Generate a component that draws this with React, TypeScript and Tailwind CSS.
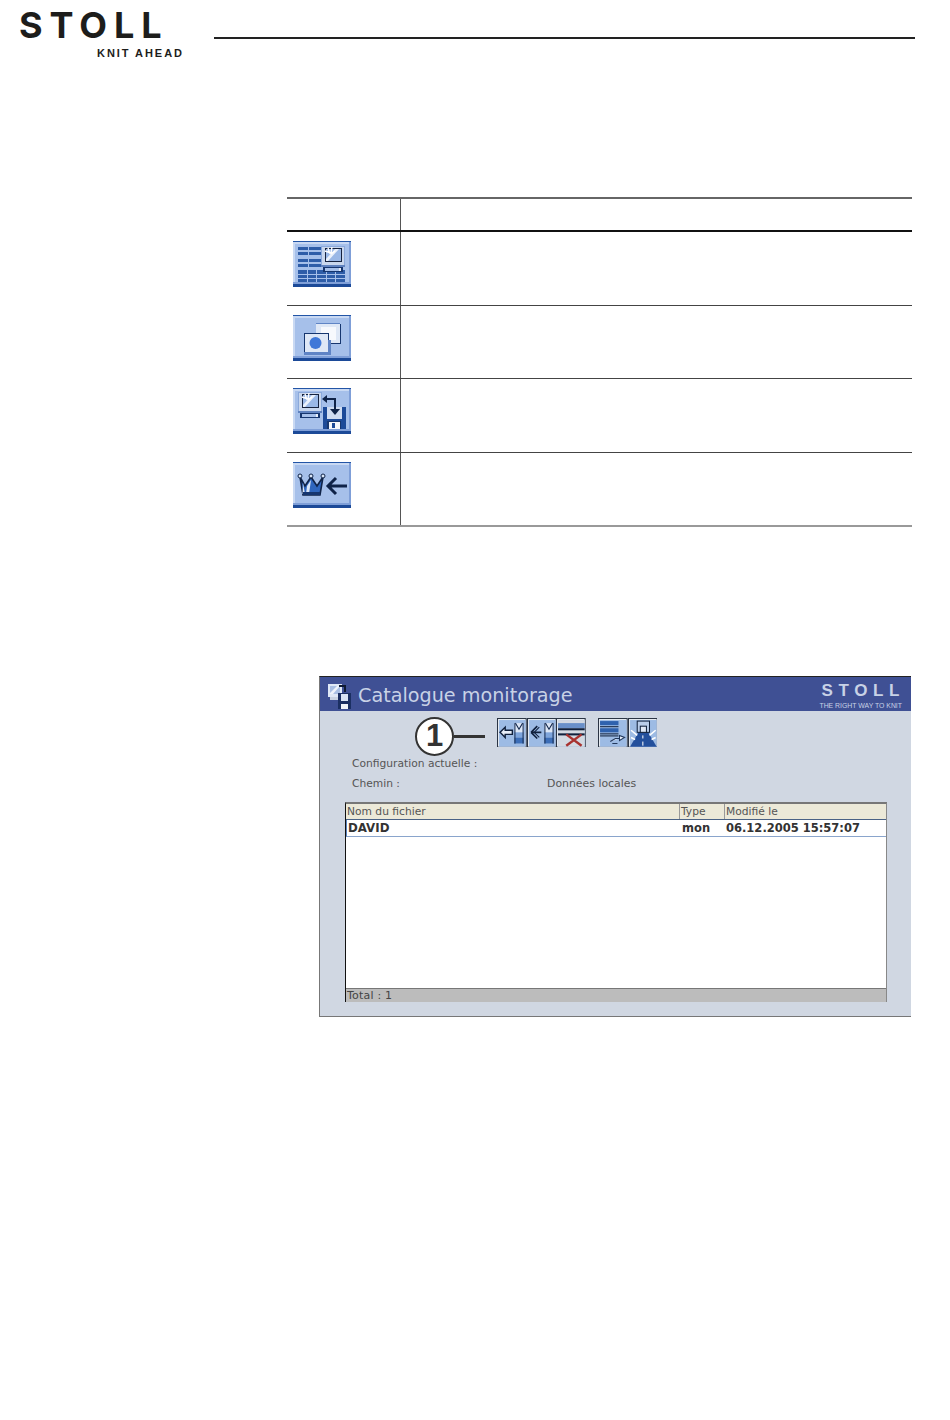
import React from "react";

function IconFrame({ children }: { children: React.ReactNode }) {
  return (
    <svg width="58" height="46" viewBox="0 0 58 46" shapeRendering="crispEdges" className="block">
      <rect width="58" height="46" fill="#a6c0ea" />
      <rect y="1" width="2" height="42" fill="#c9d9f3" />
      <rect y="1" width="58" height="2" fill="#c9d9f3" />
      <rect x="56" y="1" width="2" height="42" fill="#7f9fd8" />
      <rect y="41" width="58" height="2" fill="#7f9fd8" />
      <rect width="58" height="1" fill="#2355a6" />
      <rect y="43" width="58" height="3" fill="#1c4a98" />
      {children}
    </svg>
  );
}

function Screen({ x, y }: { x: number; y: number }) {
  return (
    <g transform={`translate(${x} ${y})`}>
      <rect x="2" y="21" width="20" height="5" fill="#16366f" />
      <rect x="4" y="22" width="14" height="3" fill="#a6c0ea" />
      <rect x="18" y="22" width="2" height="3" fill="#e8eef8" />
      <rect width="24" height="20" fill="#8ba9db" />
      <rect x="1" y="1" width="22" height="18" fill="#c9d7ed" />
      <rect x="4" y="2" width="17" height="14" fill="#16233f" />
      <rect x="5" y="3" width="15" height="12" fill="#9ab8e6" />
      <path d="M5 13 L14 3 H18 L7 15 H5Z" fill="#eaf1fb" shapeRendering="auto" />
      <path d="M7 2 L9 8 M11 1 L10 7 M4 5 L10 7 M14 5 L10 8" stroke="#fff" strokeWidth="1.4" shapeRendering="auto" />
      <rect y="19" width="24" height="2" fill="#5f82bf" />
    </g>
  );
}

function IconTable() {
  return (
    <IconFrame>
      <g fill="#2e5da8">
        {[6, 11, 18, 23].map((y) => (
          <React.Fragment key={y}>
            <rect x="5" y={y} width="10" height="3" />
            <rect x="16" y={y} width="12" height="3" />
          </React.Fragment>
        ))}
        <rect x="5" y="29" width="47" height="12" />
      </g>
      <g fill="#a6c0ea">
        <rect x="5" y="33" width="47" height="1" />
        <rect x="5" y="37" width="47" height="1" />
        <rect x="14" y="29" width="1" height="12" />
        <rect x="23" y="29" width="1" height="12" />
        <rect x="33" y="29" width="1" height="12" />
        <rect x="42" y="29" width="1" height="12" />
      </g>
      <Screen x={28} y={5} />
    </IconFrame>
  );
}

function IconWindows() {
  return (
    <IconFrame>
      <rect x="23" y="9" width="24" height="19" fill="#dfe8f6" />
      <rect x="47" y="9" width="1" height="20" fill="#16366f" />
      <rect x="23" y="28" width="25" height="1" fill="#16366f" />
      <rect x="23" y="8" width="24" height="1" fill="#5f84c5" />
      <rect x="28" y="12" width="15" height="13" fill="#f7f9fd" />
      <rect x="11" y="18" width="24" height="19" fill="#dfe8f6" stroke="#16366f" strokeWidth="1" />
      <rect x="11" y="37" width="27" height="3" fill="#5f84c5" />
      <rect x="35" y="25" width="3" height="13" fill="#5f84c5" />
      <circle cx="22.5" cy="28" r="6" fill="#3f78d8" shapeRendering="auto" />
    </IconFrame>
  );
}

function IconExchange() {
  return (
    <IconFrame>
      <Screen x={5} y={4} />
      <rect x="32" y="10" width="11" height="2" fill="#0f2348" />
      <path d="M29 11 L34 7 V15Z" fill="#0f2348" shapeRendering="auto" />
      <rect x="30" y="19" width="23" height="22" fill="#1c4a98" />
      <rect x="34" y="19" width="15" height="12" fill="#cfdcf1" />
      <rect x="34" y="33" width="14" height="8" fill="#16366f" />
      <rect x="36" y="34" width="11" height="7" fill="#f4f7fc" />
      <rect x="39" y="35" width="3" height="5" fill="#1c4a98" />
      <rect x="41" y="11" width="2" height="11" fill="#0f2348" />
      <path d="M37 21 H47 L42 27Z" fill="#0f2348" shapeRendering="auto" />
    </IconFrame>
  );
}

function IconCrown() {
  return (
    <IconFrame>
      <path d="M7 15 L12 24 L18 15 L24 24 L30 15 L27 33 H10Z" fill="#2f66bd" stroke="#0f2348" strokeWidth="1.6" shapeRendering="auto" />
      <path d="M10 21 L12 32 H9.5Z M14 24 L18 18 L16 32 H13Z" fill="#dce7f7" shapeRendering="auto" />
      <rect x="10" y="30" width="17" height="3" fill="#16366f" />
      <circle cx="7" cy="14" r="2" fill="#dce7f7" stroke="#0f2348" shapeRendering="auto" />
      <circle cx="18" cy="14" r="2" fill="#dce7f7" stroke="#0f2348" shapeRendering="auto" />
      <circle cx="30" cy="14" r="2" fill="#dce7f7" stroke="#0f2348" shapeRendering="auto" />
      <path d="M35 24 H54 M43 16 L35 24 L43 32" stroke="#0f2348" strokeWidth="3" fill="none" shapeRendering="auto" />
    </IconFrame>
  );
}

function ToolButton({ children }: { children: React.ReactNode }) {
  return (
    <svg width="29.7" height="29.7" viewBox="0 0 29 29" className="block">
      <rect width="29" height="29" fill="#2b3444" />
      <rect x="1" y="1" width="27" height="27" fill="#e8edf4" />
      <rect x="2" y="2" width="26" height="26" fill="#9dbbe4" />
      {children}
    </svg>
  );
}

function Vest({ x }: { x: number }) {
  return (
    <g transform={`translate(${x} 5)`}>
      <rect width="9" height="20" fill="#dce6f5" />
      <rect y="9" width="9" height="5" fill="#7ea5dc" />
      <rect y="14" width="9" height="6" fill="#3c6eb8" />
      <path d="M1 0 L4.5 6 L8 0" stroke="#13294f" fill="none" strokeWidth="1" />
      <rect width="1" height="20" fill="#13294f" />
      <rect x="8" width="1" height="20" fill="#13294f" />
    </g>
  );
}

function Tb1() {
  return (
    <ToolButton>
      <Vest x={17} />
      <path d="M3 14 L8 9 V12 H15 V16 H8 V19Z" fill="#e8eef8" stroke="#10203c" strokeWidth="1.4" />
    </ToolButton>
  );
}

function Tb2() {
  return (
    <ToolButton>
      <Vest x={17} />
      <path d="M4 14 L10 8 M4 14 L10 20 M4 14 H14" stroke="#10203c" strokeWidth="1.6" fill="none" />
      <path d="M7 14 L12 9 M7 14 L12 19" stroke="#10203c" strokeWidth="1" fill="none" />
    </ToolButton>
  );
}

function Tb3() {
  return (
    <ToolButton>
      <rect x="2" y="2" width="26" height="26" fill="#d3d9e2" />
      <rect x="2" y="5" width="26" height="5" fill="#6a90c9" />
      <rect x="2" y="10" width="26" height="2" fill="#10203c" />
      <rect x="2" y="15" width="26" height="2" fill="#10203c" />
      <path d="M10 16 L25 27 M25 16 L10 27" stroke="#a8322f" strokeWidth="2.4" />
    </ToolButton>
  );
}

function Tb4() {
  return (
    <ToolButton>
      <rect x="2" y="3" width="18" height="4" fill="#2f62ae" />
      <rect x="2" y="8" width="18" height="1" fill="#10203c" />
      <rect x="2" y="10" width="18" height="4" fill="#2f62ae" />
      <rect x="2" y="15" width="18" height="1" fill="#10203c" />
      <rect x="2" y="17" width="18" height="1" fill="#10203c" />
      <path d="M12 23 L17 20 H21 M19 25 H14 M21 17 L26 19 L21 22 Z" stroke="#22385c" fill="#e8eef8" strokeWidth="1" />
    </ToolButton>
  );
}

function Tb5() {
  return (
    <ToolButton>
      <path d="M2 28 L12 11 H18 L28 28Z" fill="#234f9c" />
      <path d="M3 12 L9 17 M27 12 L21 17 M3 19 L7 21 M27 19 L23 21" stroke="#fff" strokeWidth="1.5" />
      <rect x="9" y="3" width="12" height="11" fill="#b9cdea" stroke="#10203c" strokeWidth="1" />
      <rect x="12" y="8" width="6" height="6" fill="#dfe8f6" stroke="#10203c" strokeWidth="1" />
      <rect x="14" y="17" width="1" height="3" fill="#fff" />
      <rect x="14" y="23" width="1" height="4" fill="#fff" />
    </ToolButton>
  );
}

const rows = [<IconTable key="a" />, <IconWindows key="b" />, <IconExchange key="c" />, <IconCrown key="d" />];
const uiFont = "font-['DejaVu_Sans',sans-serif]";

export default function App() {
  return (
    <div className="w-[950px] h-[1420px] bg-white overflow-hidden font-['Liberation_Sans',sans-serif]">
      <header className="h-[197px] flex items-start">
        <div className="w-[214px] shrink-0 pl-[19px] pt-[5px]">
          <div className="text-[36px] leading-[40px] font-bold tracking-[6.9px] text-[#1d1d1b] font-['Inter',sans-serif]">STOLL</div>
          <div className="text-[11px] leading-[12px] pl-[78px] mt-[2px] font-bold tracking-[1.95px] whitespace-nowrap text-[#1d1d1b]">KNIT AHEAD</div>
        </div>
        <div className="w-[701px] mt-[37px] h-[2px] bg-[#222]" />
      </header>

      <div className="ml-[287px] w-[625px]">
        <div className="border-t-2 border-[#666] border-b-2 border-b-[#111] h-[35px] flex">
          <div className="w-[114px] border-r border-[#555]" />
        </div>
        {rows.map((icon, i) => (
          <div key={i} className={`flex h-[73.67px] ${i === 3 ? "border-b-2 border-[#999]" : "border-b border-[#444]"}`}>
            <div className="w-[114px] border-r border-[#555] pl-[6px] pt-[9px]">{icon}</div>
          </div>
        ))}
      </div>

      <div className={`ml-[319px] mt-[149px] w-[592px] h-[341px] bg-[#d0d7e2] border-l border-b border-[#777] border-t border-t-[#222] flex flex-col ${uiFont}`}>
        <div className="h-[34px] bg-[#3f5094] flex items-center pl-[7px] pr-[9px] shrink-0">
          <svg width="25" height="28" viewBox="0 0 25 28" className="shrink-0 mt-[2px]" shapeRendering="crispEdges">
            <rect x="1" y="3" width="14" height="13" fill="#dfe8f6" />
            <rect x="3" y="5" width="10" height="8" fill="#a9bfe4" />
            <path d="M3 12 L10 5 H13 L6 13 H3Z" fill="#eef3fb" shapeRendering="auto" />
            <rect x="3" y="16" width="10" height="3" fill="#c8d2e2" />
            <rect x="11" y="12" width="13" height="16" fill="#1b2f62" />
            <rect x="14" y="13" width="7" height="7" fill="#d9e3f4" />
            <rect x="14" y="23" width="7" height="5" fill="#f1f4fa" />
            <rect x="12" y="4" width="7" height="2" fill="#0f1a33" />
            <rect x="17" y="4" width="2" height="7" fill="#0f1a33" />
          </svg>
          <span className="ml-[6px] mt-[3px] text-[19.2px] leading-none text-[#c8d2e6] whitespace-nowrap">Catalogue monitorage</span>
          <div className="ml-auto mt-[5px] flex flex-col items-end font-['Liberation_Sans',sans-serif] text-[#c8d2e6]">
            <span className="text-[17px] leading-[17px] font-bold tracking-[5.6px] mr-[-3px]">STOLL</span>
            <span className="text-[6.9px] leading-[9px] mt-[2px] whitespace-nowrap">THE RIGHT WAY TO KNIT</span>
          </div>
        </div>

        <div className="flex items-start h-[30px] mt-[7px] pl-[95px] shrink-0">
          <div className="flex items-center mt-[-1px]">
            <div className="w-[39px] h-[39px] rounded-full border-2 border-[#333] bg-white flex items-center justify-center font-['Liberation_Sans',sans-serif] font-bold text-[31px] text-[#333] shrink-0">1</div>
            <div className="w-[31px] h-[3px] bg-[#333]" />
          </div>
          <div className="ml-[12px] flex">
            <Tb1 /><Tb2 /><Tb3 />
          </div>
          <div className="ml-[12px] flex">
            <Tb4 /><Tb5 />
          </div>
        </div>

        <div className="pl-[32px] mt-[9px] text-[10.7px] leading-[14px] text-[#555] shrink-0 h-[14px]">Configuration actuelle :</div>
        <div className="pl-[32px] mt-[6px] text-[10.7px] leading-[14px] text-[#555] flex shrink-0">
          <span className="w-[195px]">Chemin :</span>
          <span className="text-[10.9px]">Données locales</span>
        </div>

        <div className="ml-[25px] mt-[11px] w-[542px] h-[200px] bg-white border-t-2 border-t-[#777] border-l border-l-[#111] border-r border-r-[#888] flex flex-col text-[10.7px]">
          <div className="h-[16px] bg-[#ece9d8] border-b border-[#4a6285] flex text-[#555] leading-[15px] shrink-0">
            <span className="w-[334px] pl-[1px] border-r border-[#999]">Nom du fichier</span>
            <span className="w-[45px] pl-[1px] border-r border-[#999]">Type</span>
            <span className="pl-[1px]">Modifié le</span>
          </div>
          <div className="h-[17px] border-b border-[#8aa5cc] border-l border-l-[#5a84c0] flex leading-[16px] text-[#333] shrink-0">
            <span className="w-[334px] pl-[1px] font-bold text-[11.8px]">DAVID</span>
            <span className="w-[44px] pl-[1px] font-semibold text-[11.5px]">mon</span>
            <span className="pl-[1px] font-bold text-[11.5px]">06.12.2005 15:57:07</span>
          </div>
          <div className="flex-1" />
          <div className="h-[14px] bg-[#bcbcbc] border-t border-[#777] text-[#444] leading-[13px] pl-[1px] tracking-[0.2px] text-[11px] shrink-0">Total : 1</div>
        </div>
      </div>
    </div>
  );
}
